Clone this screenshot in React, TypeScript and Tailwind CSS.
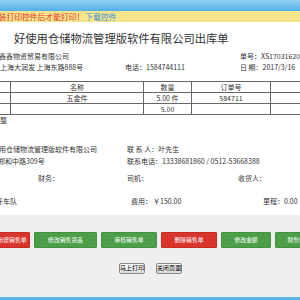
const actions = [
  { label: "新增销售单", tone: "red", size: "-ml-[6px] w-[36px]" },
  { label: "修改销售货品", tone: "green", size: "w-[63px]" },
  { label: "审核销售单", tone: "green", size: "w-[56px]" },
  { label: "删除销售单", tone: "red", size: "w-[56px]" },
  { label: "修改金额", tone: "green", size: "w-[50px]" },
  { label: "财务审核", tone: "green", size: "w-[48px] shrink-0" },
];

const toneClass = {
  red: "bg-[#d9352c] border-[#c42c24]",
  green: "bg-[#4c9f48] border-[#43913f]",
};

export default function App() {
  return (
    <div className="h-[300px] w-[300px] overflow-hidden bg-[#efefef] font-['Noto_Sans_CJK_SC',sans-serif] text-[#333]">
      <div className="h-[11px] bg-linear-to-b from-[#93d3f6] to-[#4fafe7]" />
      <div className="flex h-[11px] items-center whitespace-nowrap bg-[#f4e58d] text-[7.8px] leading-[11px]">
        <span className="-ml-[17px] text-[#e3342b]">请安装打印控件后才能打印！</span>
        <span className="ml-[1px] text-[#3d8fd6]">下载控件</span>
      </div>

      {/* printable sheet */}
      <div className="h-[193px] whitespace-nowrap bg-white text-[7px] leading-[11px]">
        <div className="h-[23px] pl-[14px] pt-[9px] text-[11.3px] leading-[14px]">
          好使用仓储物流管理版软件有限公司出库单
        </div>

        <div className="mt-[6px] flex">
          <span className="-ml-[1px] w-[241px] shrink-0">鑫鑫物资贸易有限公司</span>
          <span>单号：XS170316200001</span>
        </div>
        <div className="flex">
          <span className="w-[125px] shrink-0">上海大润发 上海东路888号</span>
          <span className="w-[115px] shrink-0">电话：1584744111</span>
          <span>日 期：2017/3/16</span>
        </div>

        <table className="-ml-[20px] mt-[8px] w-[360px] table-fixed border-collapse">
          <colgroup>
            <col className="w-[30px]" />
            <col className="w-[133px]" />
            <col className="w-[48px]" />
            <col className="w-[79px]" />
            <col className="w-[70px]" />
          </colgroup>
          <tbody>
            <tr className="h-[11px]">
              <td className="border border-[#666] p-0 text-center leading-[10px]"></td>
              <td className="border border-[#666] p-0 text-center leading-[10px]">名称</td>
              <td className="border border-[#666] p-0 text-center leading-[10px]">数量</td>
              <td className="border border-[#666] p-0 text-center leading-[10px]">订单号</td>
              <td className="border border-[#666] p-0 text-center leading-[10px]"></td>
            </tr>
            <tr className="h-[11px]">
              <td className="border border-[#666] p-0 text-center leading-[10px]"></td>
              <td className="border border-[#666] p-0 text-center leading-[10px]">五金件</td>
              <td className="border border-[#666] p-0 text-center leading-[10px]">5.00 件</td>
              <td className="border border-[#666] p-0 text-center leading-[10px]">584711</td>
              <td className="border border-[#666] p-0 text-center leading-[10px]"></td>
            </tr>
            <tr className="h-[11px]">
              <td className="border border-[#666] p-0 text-center leading-[10px]"></td>
              <td className="border border-[#666] p-0 text-center leading-[10px]"></td>
              <td className="border border-[#666] p-0 text-center leading-[10px]">5.00</td>
              <td className="border border-[#666] p-0 text-center leading-[10px]"></td>
              <td className="border border-[#666] p-0 text-center leading-[10px]"></td>
            </tr>
          </tbody>
        </table>

        <div>整</div>

        <div className="mt-[17px] flex leading-[12px]">
          <span className="-ml-[8px] w-[135px] shrink-0">使用仓储物流管理版软件有限公司</span>
          <span>联 系 人：叶先生</span>
        </div>
        <div className="flex leading-[12px]">
          <span className="-ml-[2px] w-[129px] shrink-0">郑和中路309号</span>
          <span>联系电话：13338681860 / 0512-53668388</span>
        </div>

        <div className="mt-[6px] flex">
          <span className="ml-[38px] w-[89px] shrink-0">财务：</span>
          <span className="w-[111px] shrink-0">司机：</span>
          <span>收货人：</span>
        </div>
        <div className="mt-[12px] flex">
          <span className="-ml-[4px] w-[135px] shrink-0">牙车队</span>
          <span className="w-[22px] shrink-0">费用：</span>
          <span className="w-[110px] shrink-0">￥150.00</span>
          <span>里程：0.00</span>
        </div>
      </div>

      {/* actions */}
      <div className="h-[82px] pt-[17px]">
        <div className="flex gap-[4px]">
          {actions.map((a) => (
            <button
              key={a.label}
              className={`${a.size} ${toneClass[a.tone as "red" | "green"]} flex h-[16px] shrink-0 items-center justify-center whitespace-nowrap rounded-[1px] border text-[5.8px] leading-none text-white`}
            >
              {a.label}
            </button>
          ))}
        </div>
        <div className="mt-[15px] flex gap-[11px] pl-[119px]">
          <button className="flex h-[11px] w-[26px] items-center justify-center whitespace-nowrap rounded-[2px] border border-[#8a8a8a] bg-linear-to-b from-[#fafafa] to-[#dcdcdc] text-[6.2px] leading-none text-black">
            马上打印
          </button>
          <button className="flex h-[11px] w-[26px] items-center justify-center whitespace-nowrap rounded-[2px] border border-[#8a8a8a] bg-linear-to-b from-[#fafafa] to-[#dcdcdc] text-[6.2px] leading-none text-black">
            关闭页面
          </button>
        </div>
      </div>
      <div className="h-[3px] bg-[#5ab4e5]" />
    </div>
  );
}
